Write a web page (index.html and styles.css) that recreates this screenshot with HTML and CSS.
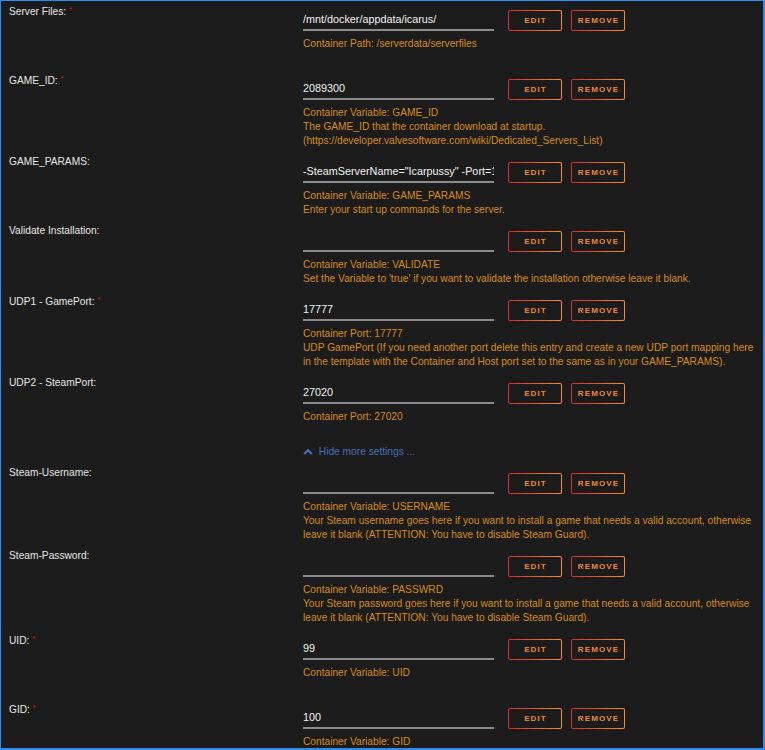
FILE: index.html
```html
<!DOCTYPE html>
<html lang="en">
<head>
  <meta charset="UTF-8">
  <meta name="viewport" content="width=device-width, initial-scale=1.0">
  <title>Icarus - Template Settings</title>
  <link rel="stylesheet" href="styles.css">
</head>
<body>
  <div class="panel">

    <div class="setting">
      <div class="label">Server Files: <span class="req">*</span></div>
      <div class="field">
        <div class="controls">
          <input class="value" type="text" value="/mnt/docker/appdata/icarus/">
          <button class="btn">Edit</button>
          <button class="btn">Remove</button>
        </div>
        <div class="desc">Container Path: /serverdata/serverfiles</div>
      </div>
    </div>

    <div class="setting">
      <div class="label">GAME_ID: <span class="req">*</span></div>
      <div class="field">
        <div class="controls">
          <input class="value" type="text" value="2089300">
          <button class="btn">Edit</button>
          <button class="btn">Remove</button>
        </div>
        <div class="desc">Container Variable: GAME_ID<br>The GAME_ID that the container download at startup. (https://developer.valvesoftware.com/wiki/Dedicated_Servers_List)</div>
      </div>
    </div>

    <div class="setting">
      <div class="label">GAME_PARAMS:</div>
      <div class="field">
        <div class="controls">
          <input class="value" type="text" value='-SteamServerName="Icarpussy" -Port=17777 -QueryPort=27020'>
          <button class="btn">Edit</button>
          <button class="btn">Remove</button>
        </div>
        <div class="desc">Container Variable: GAME_PARAMS<br>Enter your start up commands for the server.</div>
      </div>
    </div>

    <div class="setting">
      <div class="label">Validate Installation:</div>
      <div class="field">
        <div class="controls">
          <input class="value" type="text" value="">
          <button class="btn">Edit</button>
          <button class="btn">Remove</button>
        </div>
        <div class="desc">Container Variable: VALIDATE<br>Set the Variable to 'true' if you want to validate the installation otherwise leave it blank.</div>
      </div>
    </div>

    <div class="setting">
      <div class="label">UDP1 - GamePort: <span class="req">*</span></div>
      <div class="field">
        <div class="controls">
          <input class="value" type="text" value="17777">
          <button class="btn">Edit</button>
          <button class="btn">Remove</button>
        </div>
        <div class="desc">Container Port: 17777<br>UDP GamePort (If you need another port delete this entry and create a new UDP port mapping here in the template with the Container and Host port set to the same as in your GAME_PARAMS).</div>
      </div>
    </div>

    <div class="setting">
      <div class="label">UDP2 - SteamPort:</div>
      <div class="field">
        <div class="controls">
          <input class="value" type="text" value="27020">
          <button class="btn">Edit</button>
          <button class="btn">Remove</button>
        </div>
        <div class="desc">Container Port: 27020</div>
      </div>
    </div>

    <div class="toggle">
      <a href="#" class="toggle-link">
        <svg class="chevron" width="10" height="7" viewBox="0 0 10 7"><polyline points="1.2,6 5,2.2 8.8,6" fill="none" stroke="currentColor" stroke-width="2.2"/></svg>
        Hide more settings ...
      </a>
    </div>

    <div class="setting">
      <div class="label">Steam-Username:</div>
      <div class="field">
        <div class="controls">
          <input class="value" type="text" value="">
          <button class="btn">Edit</button>
          <button class="btn">Remove</button>
        </div>
        <div class="desc">Container Variable: USERNAME<br>Your Steam username goes here if you want to install a game that needs a valid account, otherwise leave it blank (ATTENTION: You have to disable Steam Guard).</div>
      </div>
    </div>

    <div class="setting">
      <div class="label">Steam-Password:</div>
      <div class="field">
        <div class="controls">
          <input class="value" type="text" value="">
          <button class="btn">Edit</button>
          <button class="btn">Remove</button>
        </div>
        <div class="desc">Container Variable: PASSWRD<br>Your Steam password goes here if you want to install a game that needs a valid account, otherwise leave it blank (ATTENTION: You have to disable Steam Guard).</div>
      </div>
    </div>

    <div class="setting">
      <div class="label">UID: <span class="req">*</span></div>
      <div class="field">
        <div class="controls">
          <input class="value" type="text" value="99">
          <button class="btn">Edit</button>
          <button class="btn">Remove</button>
        </div>
        <div class="desc">Container Variable: UID</div>
      </div>
    </div>

    <div class="setting">
      <div class="label">GID: <span class="req">*</span></div>
      <div class="field">
        <div class="controls">
          <input class="value" type="text" value="100">
          <button class="btn">Edit</button>
          <button class="btn">Remove</button>
        </div>
        <div class="desc">Container Variable: GID</div>
      </div>
    </div>

  </div>
</body>
</html>
```

FILE: styles.css
```css
html, body {
  margin: 0;
  height: 100%;
}

body {
  font-family: "Liberation Sans", Arial, sans-serif;
  font-size: 10.2px;
  background-color: #1c1c1c;
  color: #e6e6e6;
}

.panel {
  box-sizing: border-box;
  height: 100vh;
  overflow: hidden;
  border: 2px solid #2f8bee;
  border-top-width: 1px;
  border-left-width: 1px;
  padding: 2px 0 0 8px;
}

.setting {
  display: flex;
  min-height: 69px;
}

.label {
  flex: none;
  width: 294px;
  line-height: 14px;
}

.req {
  color: #d42020;
  font-size: 8px;
  vertical-align: 3px;
}

.field {
  flex: 1;
  padding: 7px 0 7px 0;
}

.controls {
  display: flex;
  align-items: flex-start;
  height: 21px;
}

.value {
  box-sizing: border-box;
  width: 191px;
  height: 21px;
  margin: 0 14px 0 0;
  padding: 0 0 1px 0;
  background: transparent;
  border: none;
  border-bottom: 2px solid #8c8c8c;
  color: #f2f2f2;
  font-family: inherit;
  font-size: 10.8px;
  outline: none;
}

/* gradient outline: dark fill on the padding box, red-orange fade under the border */
.btn {
  box-sizing: border-box;
  width: 54px;
  height: 21px;
  margin: 0 9px 0 0;
  padding: 0 0 0 1px;
  border: 1px solid transparent;
  border-radius: 2px;
  background:
    linear-gradient(#1c1c1c, #1c1c1c) padding-box,
    linear-gradient(90deg, #dc2a2a, #f88c2c) border-box;
  color: #ee8a38;
  font-family: inherit;
  font-size: 8px;
  font-weight: bold;
  letter-spacing: 1.1px;
  text-transform: uppercase;
  cursor: pointer;
}

.desc {
  margin-top: 6px;
  line-height: 14px;
  color: #d58b1d;
}

.toggle {
  height: 21px;
  padding-left: 294px;
  line-height: 14px;
}

.toggle-link {
  color: #4a6fb8;
  text-decoration: none;
}

.chevron {
  margin-right: 3px;
  vertical-align: 0;
}
```
